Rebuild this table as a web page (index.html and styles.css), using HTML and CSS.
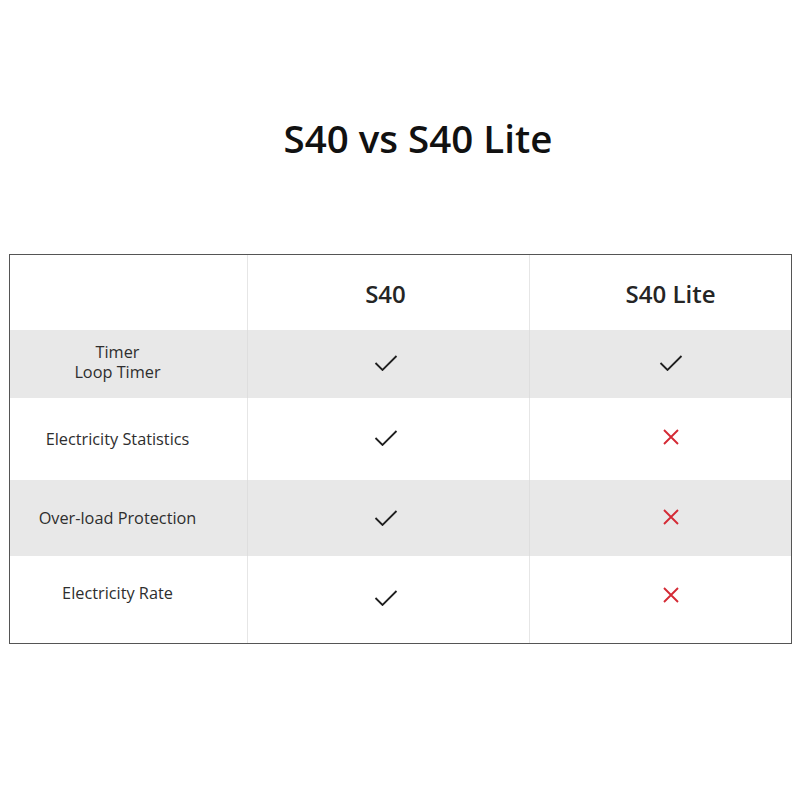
FILE: index.html
```html
<!DOCTYPE html>
<html>
<head>
<meta charset="utf-8">
<link rel="stylesheet" href="styles.css">
</head>
<body>
<div class="page">
  <h1 class="title">S40 vs S40 Lite</h1>
  <div class="table">
    <div class="cell label head"></div>
    <div class="cell mid head"><span class="hname">S40</span></div>
    <div class="cell right head"><span class="hname">S40 Lite</span></div>

    <div class="cell label r1 gray"><span>Timer<br>Loop Timer</span></div>
    <div class="cell mid r1 gray"><svg class="check" viewBox="0 0 24 16"><polyline points="1.5,8 8.5,15 22.5,1"/></svg></div>
    <div class="cell right r1 gray"><svg class="check" viewBox="0 0 24 16"><polyline points="1.5,8 8.5,15 22.5,1"/></svg></div>

    <div class="cell label r2"><span>Electricity Statistics</span></div>
    <div class="cell mid r2"><svg class="check" viewBox="0 0 24 16"><polyline points="1.5,8 8.5,15 22.5,1"/></svg></div>
    <div class="cell right r2"><svg class="cross" viewBox="0 0 16 16"><path d="M1 1 L15 15 M15 1 L1 15"/></svg></div>

    <div class="cell label r3 gray"><span>Over-load Protection</span></div>
    <div class="cell mid r3 gray"><svg class="check" viewBox="0 0 24 16"><polyline points="1.5,8 8.5,15 22.5,1"/></svg></div>
    <div class="cell right r3 gray"><svg class="cross" viewBox="0 0 16 16"><path d="M1 1 L15 15 M15 1 L1 15"/></svg></div>

    <div class="cell label r4 last"><span>Electricity Rate</span></div>
    <div class="cell mid r4 last"><svg class="check" viewBox="0 0 24 16"><polyline points="1.5,8 8.5,15 22.5,1"/></svg></div>
    <div class="cell right r4 last"><svg class="cross" viewBox="0 0 16 16"><path d="M1 1 L15 15 M15 1 L1 15"/></svg></div>
  </div>
</div>
</body>
</html>
```
FILE: styles.css
```css
html, body {
  margin: 0;
  padding: 0;
  background: #fff;
}
body {
  font-family: "Open Sans", "Noto Sans", sans-serif;
  color: #333;
}
.page {
  width: 800px;
  padding-top: 108px;
}
.title {
  margin: 0;
  text-align: center;
  font-size: 38.5px;
  font-weight: 600;
  line-height: 60px;
  color: #111;
  padding-left: 36px;
}
.table {
  margin: 86px 0 0 9px;
  width: 781px;
  border: 1px solid #555;
  display: grid;
  grid-template-columns: 237px 283px 261px;
  grid-template-rows: 75px 68px 82px 76px 87px;
}
.cell {
  display: flex;
  align-items: center;
  justify-content: center;
  text-align: center;
}
.mid {
  border-left: 1px solid #e6e6e6;
  border-right: 1px solid #e6e6e6;
}
.gray {
  background: #e8e8e8;
}
.gray.mid {
  border-color: #dedede;
}
.label {
  padding-right: 22px;
  font-size: 16.3px;
  line-height: 20px;
  color: #2e2e2e;
}
.label.r1 span {
  position: relative;
  top: -2px;
}
.label.r4 {
  padding-bottom: 14px;
}
.mid {
  padding-right: 6px;
}
.right {
  padding-left: 20px;
}
.hname {
  font-size: 24px;
  font-weight: 600;
  color: #252525;
  padding-top: 2px;
}
.check {
  width: 24px;
  height: 16px;
  fill: none;
  stroke: #1f1f1f;
  stroke-width: 1.8;
}
.r1 .check { margin-top: -2px; }
.r2 .check { margin-top: -2px; }
.r4 .check { margin-top: -4px; }
.cross {
  width: 16px;
  height: 16px;
  fill: none;
  stroke: #d42a35;
  stroke-width: 1.9;
}
.r2 .cross { margin-top: -5px; }
.r3 .cross { margin-top: -2px; }
.r4 .cross { margin-top: -10px; }
```
